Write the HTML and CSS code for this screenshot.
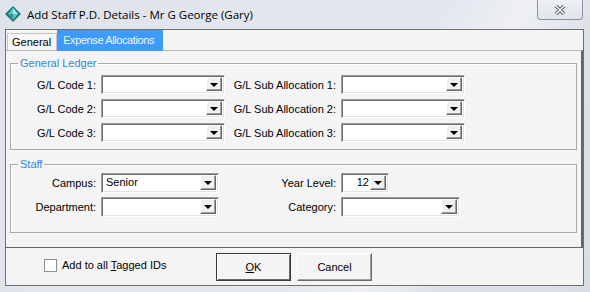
FILE: index.html
```html
<!DOCTYPE html>
<html lang="en">
<head>
    <meta charset="UTF-8">
    <title>Add Staff P.D. Details</title>
    <link rel="stylesheet" href="styles.css">
</head>
<body>
    <div class="window">
        <div class="titlebar">
            <svg class="app-icon" width="16" height="16" viewBox="0 0 16 16">
                <polygon points="8,0 16,8 8,16 0,8" fill="#1f7a78"/>
                <polygon points="8,2 13,8 8,14 3,8" fill="#5fc3bf"/>
                <polygon points="8,2 13,8 8,8" fill="#a6e6e2"/>
                <polygon points="3,8 8,14 8,8" fill="#2f9894"/>
            </svg>
            <span class="title">Add Staff P.D. Details - Mr G George (Gary)</span>
            <div class="close-btn">
                <svg width="12" height="10" viewBox="0 0 12 10">
                    <path d="M2 1 L10 9 M10 1 L2 9" stroke="#4a5566" stroke-width="3.4"/>
                    <path d="M2 1 L10 9 M10 1 L2 9" stroke="#ffffff" stroke-width="1.6"/>
                </svg>
            </div>
        </div>

        <div class="client">
            <div class="tabs">
                <div class="tab">General</div>
                <div class="tab active">Expense Allocations</div>
            </div>

            <div class="panel">
                <fieldset class="group ledger">
                    <legend>General Ledger</legend>
                    <div class="form-grid">
                        <label>G/L Code 1:</label>
                        <div class="combo"><span class="value"></span><span class="drop"></span></div>
                        <label>G/L Sub Allocation 1:</label>
                        <div class="combo"><span class="value"></span><span class="drop"></span></div>

                        <label>G/L Code 2:</label>
                        <div class="combo"><span class="value"></span><span class="drop"></span></div>
                        <label>G/L Sub Allocation 2:</label>
                        <div class="combo"><span class="value"></span><span class="drop"></span></div>

                        <label>G/L Code 3:</label>
                        <div class="combo"><span class="value"></span><span class="drop"></span></div>
                        <label>G/L Sub Allocation 3:</label>
                        <div class="combo"><span class="value"></span><span class="drop"></span></div>
                    </div>
                </fieldset>

                <fieldset class="group staff">
                    <legend>Staff</legend>
                    <div class="form-grid tall">
                        <label>Campus:</label>
                        <div class="combo campus"><span class="value">Senior</span><span class="drop"></span></div>
                        <label>Year Level:</label>
                        <div class="combo year"><span class="value num">12</span><span class="drop"></span></div>

                        <label>Department:</label>
                        <div class="combo campus"><span class="value"></span><span class="drop"></span></div>
                        <label>Category:</label>
                        <div class="combo category"><span class="value"></span><span class="drop"></span></div>
                    </div>
                </fieldset>
            </div>

            <div class="footer">
                <div class="tagged">
                    <span class="checkbox"></span>
                    <span>Add to all <u>T</u>agged IDs</span>
                </div>
                <button class="btn default"><u>O</u>K</button>
                <button class="btn">Cancel</button>
            </div>
        </div>
    </div>
</body>
</html>
```

FILE: styles.css
```css
body {
    margin: 0;
    font-family: "Liberation Sans", Arial, sans-serif;
    font-size: 11px;
    color: #000;
}

.window {
    width: 590px;
    height: 292px;
    display: flex;
    flex-direction: column;
    background: linear-gradient(120deg, #dfe3ea 0%, #e4e7ee 60%, #eef0f4 70%, #dde1e8 80%, #d9dde5 100%);
    overflow: hidden;
}

.titlebar {
    height: 29px;
    display: flex;
    align-items: center;
    padding-left: 5px;
    box-sizing: border-box;
}

.app-icon {
    margin-top: -1px;
}

.title {
    margin-left: 6px;
    font-family: "Open Sans", "Liberation Sans", sans-serif;
    font-size: 11.5px;
    color: #000;
    margin-top: -1px;
}

.close-btn {
    margin-left: auto;
    margin-right: 7px;
    align-self: flex-start;
    width: 44px;
    height: 19px;
    border: 1px solid #8a93a2;
    border-top: none;
    border-radius: 0 0 4px 4px;
    background: linear-gradient(#eef0f4, #e2e5eb);
    display: flex;
    align-items: center;
    justify-content: center;
}

.client {
    flex: 1;
    margin: 0 6px 6px 5px;
    border: 1px solid #6f6f6f;
    background: #f4f4f4;
    display: flex;
    flex-direction: column;
}

.tabs {
    height: 20px;
    display: flex;
    align-items: flex-end;
    padding-left: 1px;
}

.tab {
    height: 17px;
    box-sizing: border-box;
    border: 1px solid #c4c4c4;
    border-bottom: none;
    padding: 2px 5px 0 4px;
    background: #f7f7f7;
}

.tab.active {
    height: 21px;
    margin-bottom: -1px;
    position: relative;
    background: #3c9bfb;
    border-color: #3c9bfb;
    color: #eef5ff;
    padding: 3px 8px 0 5px;
    letter-spacing: -0.4px;
}

.panel {
    border-top: 1px solid #b9b9b9;
    border-bottom: 1px solid #666;
    border-right: 2px solid #666;
    padding: 6px 4px 14px 4px;
    height: 198px;
    box-sizing: border-box;
}

.group {
    margin: 0;
    padding: 0 0 7px 0;
    border: 1px solid #a9a9a9;
    box-shadow: inset 1px 1px 0 #fff;
}

.group legend {
    margin-left: 7px;
    padding: 0 2px;
    color: #2d86e6;
    font-size: 11px;
    line-height: 13px;
}

.staff {
    margin-top: 8px;
    padding-bottom: 15px;
}

.form-grid {
    display: grid;
    grid-template-columns: 85px 124px 106px 124px;
    column-gap: 5px;
    row-gap: 5px;
    align-items: center;
    padding-top: 5px;
}

.form-grid.tall {
    padding-top: 2px;
    row-gap: 4px;
}

.form-grid label {
    text-align: right;
    white-space: nowrap;
}

.combo {
    height: 19px;
    box-sizing: border-box;
    display: flex;
    background: #fff;
    border: 1px solid;
    border-color: #a0a0a0 #fff #fff #a0a0a0;
    box-shadow: inset 1px 1px 0 #696969, inset -1px -1px 0 #e3e3e3;
    padding: 1px 2px 2px 1px;
}

.tall .combo {
    height: 20px;
}

.combo.campus {
    width: 118px;
}

.combo.year {
    width: 48px;
}

.combo.category {
    width: 119px;
}

.value {
    flex: 1;
    padding-left: 3px;
    line-height: 15px;
}

.value.num {
    text-align: right;
    padding-right: 1px;
}

.drop {
    width: 16px;
    box-sizing: border-box;
    background: #f0f0f0;
    border: 1px solid;
    border-color: #fff #696969 #696969 #fff;
    box-shadow: inset -1px -1px 0 #a0a0a0;
    display: flex;
    align-items: center;
    justify-content: center;
}

.drop::after {
    content: "";
    border-left: 4px solid transparent;
    border-right: 4px solid transparent;
    border-top: 4px solid #000;
    margin: 1px 1px 0 0;
}

.footer {
    flex: 1;
    display: flex;
    align-items: center;
    padding-left: 38px;
    padding-top: 1px;
}

.tagged {
    width: 172px;
    display: flex;
    align-items: center;
    margin-top: -4px;
}

.checkbox {
    width: 13px;
    height: 13px;
    box-sizing: border-box;
    border: 1px solid #8e8f8f;
    background: #fff;
    margin-right: 5px;
}

.btn {
    width: 75px;
    height: 28px;
    margin-right: 6px;
    font-family: inherit;
    font-size: 11px;
    background: #f4f4f4;
    border: 1px solid;
    border-color: #fff #696969 #696969 #fff;
    box-shadow: inset -1px -1px 0 #a0a0a0;
    padding: 0;
}

.btn.default {
    border: 1px solid #3a3a3a;
    box-shadow: inset 1px 1px 0 #fff, inset -1px -1px 0 #696969;
}
```
